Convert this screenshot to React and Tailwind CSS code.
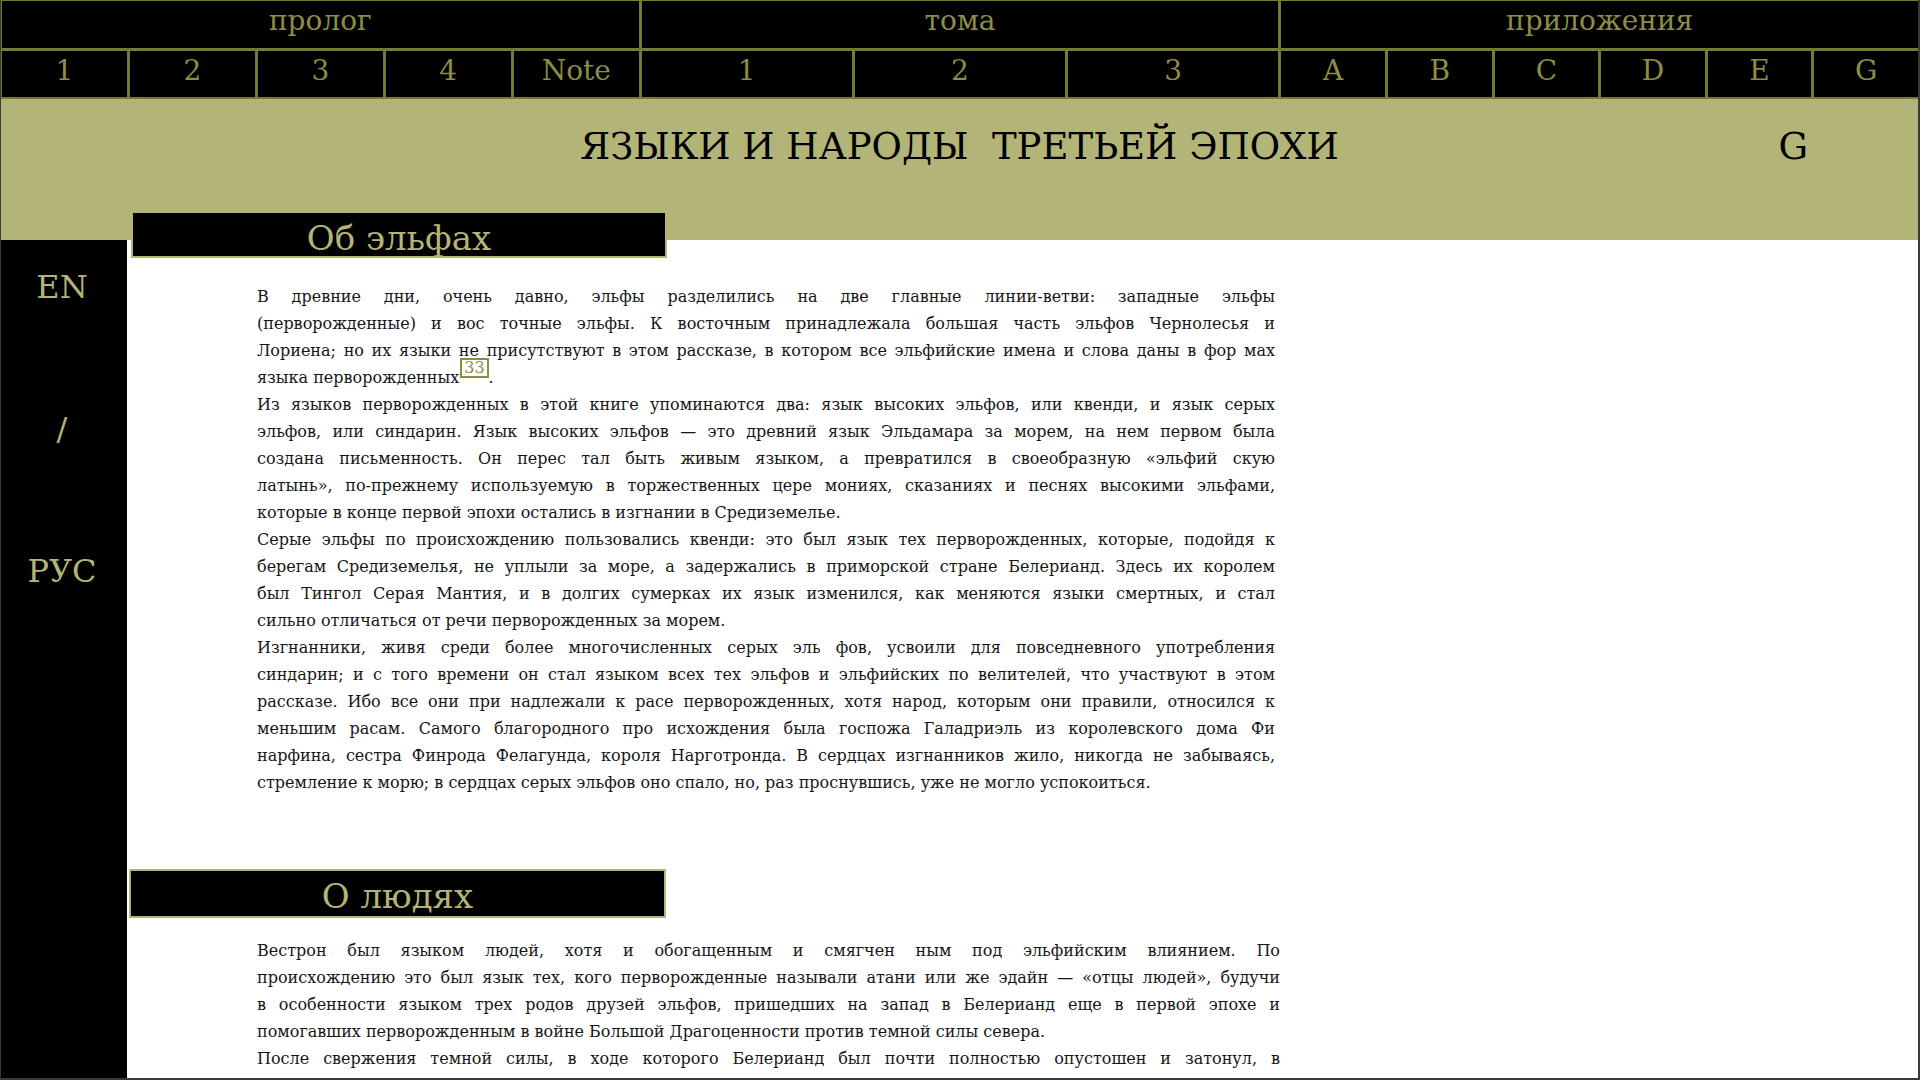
import React from "react";

const groups = [
  { name: "пролог", items: ["1", "2", "3", "4", "Note"] },
  { name: "тома", items: ["1", "2", "3"] },
  { name: "приложения", items: ["A", "B", "C", "D", "E", "G"] },
];

function Footnote({ n }) {
  return (
    <span className="relative -top-[10px] ml-[1px] inline-block border-2 border-[#8a8d45] px-[2px] text-[16px] leading-[16px] text-[#8a8d45]">
      {n}
    </span>
  );
}

function Line({ children, last }) {
  return last ? (
    <span className="block whitespace-nowrap text-left">{children}</span>
  ) : (
    <span className="block whitespace-nowrap text-justify [text-align-last:justify]">{children}</span>
  );
}

function Para({ lines }) {
  return (
    <p>
      {lines.map((l, i) => (
        <Line key={i} last={i === lines.length - 1}>
          {l}
        </Line>
      ))}
    </p>
  );
}

const elves = [
  [
    "В древние дни, очень давно, эльфы разделились на две главные линии-ветви: западные эльфы",
    "(перворожденные) и вос точные эльфы. К восточным принадлежала большая часть эльфов Чернолесья и",
    "Лориена; но их языки не присутствуют в этом рассказе, в котором все эльфийские имена и слова даны в фор мах",
    <>
      языка перворожденных<Footnote n="33" />.
    </>,
  ],
  [
    "Из языков перворожденных в этой книге упоминаются два: язык высоких эльфов, или квенди, и язык серых",
    "эльфов, или синдарин. Язык высоких эльфов — это древний язык Эльдамара за морем, на нем первом была",
    "создана письменность. Он перес тал быть живым языком, а превратился в своеобразную «эльфий скую",
    "латынь», по-прежнему используемую в торжественных цере мониях, сказаниях и песнях высокими эльфами,",
    "которые в конце первой эпохи остались в изгнании в Средиземелье.",
  ],
  [
    "Серые эльфы по происхождению пользовались квенди: это был язык тех перворожденных, которые, подойдя к",
    "берегам Средиземелья, не уплыли за море, а задержались в приморской стране Белерианд. Здесь их королем",
    "был Тингол Серая Мантия, и в долгих сумерках их язык изменился, как меняются языки смертных, и стал",
    "сильно отличаться от речи перворожденных за морем.",
  ],
  [
    "Изгнанники, живя среди более многочисленных серых эль фов, усвоили для повседневного употребления",
    "синдарин; и с того времени он стал языком всех тех эльфов и эльфийских по велителей, что участвуют в этом",
    "рассказе. Ибо все они при надлежали к расе перворожденных, хотя народ, которым они правили, относился к",
    "меньшим расам. Самого благородного про исхождения была госпожа Галадриэль из королевского дома Фи",
    "нарфина, сестра Финрода Фелагунда, короля Нарготронда. В сердцах изгнанников жило, никогда не забываясь,",
    "стремление к морю; в сердцах серых эльфов оно спало, но, раз проснувшись, уже не могло успокоиться.",
  ],
];

const men = [
  [
    "Вестрон был языком людей, хотя и обогащенным и смягчен ным под эльфийским влиянием. По",
    "происхождению это был язык тех, кого перворожденные называли атани или же эдайн — «отцы людей», будучи",
    "в особенности языком трех родов друзей эльфов, пришедших на запад в Белерианд еще в первой эпохе и",
    "помогавших перворожденным в войне Большой Драгоценности против темной силы севера.",
  ],
  [
    "После свержения темной силы, в ходе которого Белерианд был почти полностью опустошен и затонул, в",
    "начале второй эпохи многие из эдайн отправились за море, в Нуменор, а язык их изменился.",
  ],
];

export default function App() {
  return (
    <div className="w-[1920px] h-[1080px] overflow-hidden flex flex-col border-l border-r-2 border-b-2 border-[#3a3a3a] bg-white font-['DejaVu_Serif',serif]">
      {/* Top navigation */}
      <div className="flex flex-col gap-[3px] bg-[#767a32] pt-[1px] pb-[2px] pl-[1px]">
        <div className="flex gap-[3px] h-[47px]">
          {groups.map((g) => (
            <div
              key={g.name}
              className="flex-1 bg-black flex items-center justify-center text-[28px] leading-none text-[#8b8e46] pb-[7px]"
            >
              {g.name}
            </div>
          ))}
        </div>
        <div className="flex gap-[3px] h-[46px]">
          {groups.map((g) => (
            <div key={g.name} className="flex-1 flex gap-[3px]">
              {g.items.map((it) => (
                <div
                  key={it}
                  className="flex-1 bg-black flex items-center justify-center text-[28px] leading-none text-[#8b8e46] pb-[6px]"
                >
                  {it}
                </div>
              ))}
            </div>
          ))}
        </div>
      </div>

      {/* Olive header */}
      <div className="h-[141px] shrink-0 bg-[#b3b478] grid grid-cols-[1fr_auto_1fr] items-start pt-[29px]">
        <div />
        <div className="text-[37px] leading-[38px] text-black whitespace-pre">
          ЯЗЫКИ И НАРОДЫ  ТРЕТЬЕЙ ЭПОХИ
        </div>
        <div className="flex justify-end pr-[110px] text-[37px] leading-[38px] text-black">
          G
        </div>
      </div>

      {/* Body */}
      <div className="flex flex-1 min-h-0">
        <div className="w-[126px] shrink-0 bg-black flex flex-col items-center pt-[27px] pr-[4px] gap-[102px] text-[32px] leading-[40px] text-[#b3b478]">
          <div>EN</div>
          <div>/</div>
          <div>РУС</div>
        </div>

        <div className="flex-1 bg-white flex flex-col">
          <div className="ml-[4px] -mt-[29px] w-[536px] h-[47px] shrink-0 border-2 border-[#b3b478] bg-black flex items-center justify-center pt-[6px] text-[34px] leading-none text-[#b3b478]">
            Об эльфах
          </div>

          <div className="mt-[25px] ml-[130px] w-[1018px] text-[16px] leading-[27px] text-[#161616]">
            {elves.map((p, i) => (
              <Para key={i} lines={p} />
            ))}
          </div>

          <div className="mt-[73px] ml-[2px] w-[537px] h-[49px] shrink-0 border-2 border-[#b3b478] bg-black flex items-center justify-center pt-[5px] text-[34px] leading-none text-[#b3b478]">
            О людях
          </div>

          <div className="mt-[19px] ml-[130px] w-[1023px] text-[16px] leading-[27px] text-[#161616]">
            {men.map((p, i) => (
              <Para key={i} lines={p} />
            ))}
          </div>
        </div>
      </div>
    </div>
  );
}
